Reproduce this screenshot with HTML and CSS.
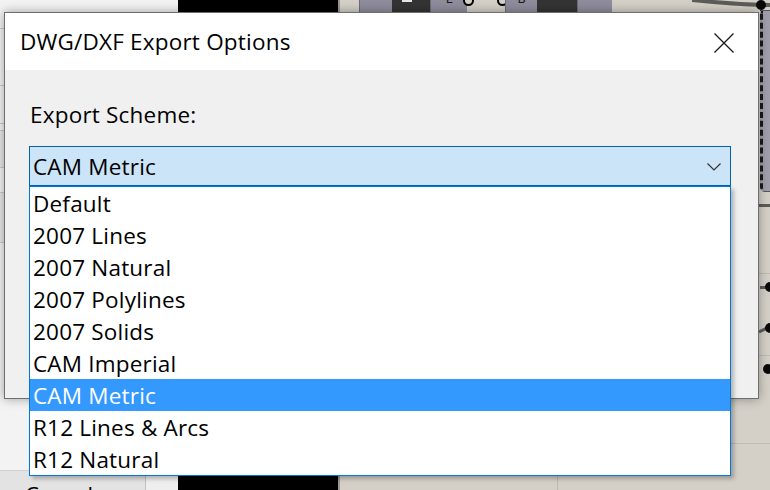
FILE: index.html
```html
<!DOCTYPE html>
<html>
<head>
<meta charset="utf-8">
<link rel="stylesheet" href="styles.css">
</head>
<body>
<div class="desktop">
  <div class="left-panel">
    <div class="lp-row r1"></div>
    <div class="lp-row r2"></div>
    <div class="lp-row r3"></div>
    <div class="lp-row r4"></div>
    <div class="lp-row r5 shade"></div>
    <div class="lp-row r6"></div>
    <div class="lp-row r7 shade"></div>
    <div class="lp-fill"></div>
    <div class="lp-bottom">
      <div class="lp-btn"><span class="cancel">Cancel</span></div>
      <div class="lp-rest"></div>
    </div>
  </div>
  <div class="black-col"></div>
  <div class="canvas">
    <div class="node comp" style="left:19px;width:33px"></div>
    <div class="node dark" style="left:52px;width:38px"><div class="mark"></div></div>
    <div class="node comp" style="left:90px;width:37px"><span class="glyph">L</span></div>
    <div class="node port" style="left:123px"></div>
    <div class="node port" style="left:157px"></div>
    <div class="node comp" style="left:165px;width:32px"><span class="glyph">B</span></div>
    <div class="node dark" style="left:197px;width:40px"></div>
    <div class="node comp" style="left:237px;width:35px"></div>
    <svg class="wire-top" width="90" height="14" viewBox="0 0 90 14"><path d="M0 0 C30 3 55 5 80 5" stroke="#5c5c58" stroke-width="4" fill="none"/></svg>
    <div class="dot" style="left:416px;top:0px"></div>
    <div class="side-comp"></div>
    <div class="hwire" style="top:204px"></div>
    <div class="gline" style="top:273px"></div>
    <div class="hwire" style="top:286px;left:420px;width:10px"></div>
    <svg class="wire-slope" width="14" height="12" viewBox="0 0 14 12"><path d="M0 10 L12 4" stroke="#5c5c58" stroke-width="3" fill="none"/></svg>
    <div class="gline" style="top:355px"></div>
    <div class="gline" style="top:443px"></div>
    <div class="dot" style="left:425px;top:282px"></div>
    <div class="dot" style="left:425px;top:323px"></div>
    <div class="dot" style="left:423px;top:364px"></div>
    <div class="vline" style="left:217px;top:476px"></div>
  </div>

  <div class="dialog">
    <div class="titlebar">
      <span class="title">DWG/DXF Export Options</span>
      <svg class="close" width="20" height="20" viewBox="0 0 20 20"><path d="M0.5 0.5 L19.5 19.5 M19.5 0.5 L0.5 19.5" stroke="#1a1a1a" stroke-width="1.3" fill="none"/></svg>
    </div>
    <div class="dlg-body">
      <div class="label">Export Scheme:</div>
      <div class="combo">
        <span class="combo-text">CAM Metric</span>
        <svg class="chev" width="14" height="8" viewBox="0 0 14 8"><path d="M0.5 0.5 L7 7 L13.5 0.5" stroke="#333" stroke-width="1.2" fill="none"/></svg>
      </div>
    </div>
  </div>

  <ul class="droplist">
    <li>Default</li>
    <li>2007 Lines</li>
    <li>2007 Natural</li>
    <li>2007 Polylines</li>
    <li>2007 Solids</li>
    <li>CAM Imperial</li>
    <li class="sel">CAM Metric</li>
    <li>R12 Lines &amp; Arcs</li>
    <li>R12 Natural</li>
  </ul>
</div>
</body>
</html>
```

FILE: styles.css
```css
* { box-sizing: border-box; }
html, body { margin: 0; padding: 0; }
body {
  width: 770px;
  height: 490px;
  overflow: hidden;
  font-family: "Open Sans", "Noto Sans", "Liberation Sans", sans-serif;
}
.desktop {
  position: relative;
  width: 770px;
  height: 490px;
  display: flex;
  overflow: hidden;
  background: #d4d0c8;
}
.left-panel {
  width: 178px;
  height: 490px;
  display: flex;
  flex-direction: column;
  background: #f3f3f3;
}
.lp-row { border-bottom: 1px solid #c9c9c9; }
.lp-row.shade { background: #e7e7e7; }
.r1 { height: 29px; }
.r2 { height: 57px; }
.r3 { height: 38px; }
.r4 { height: 7px; }
.r5 { height: 37px; }
.r6 { height: 25px; }
.r7 { height: 50px; }
.lp-fill { flex: 1; }
.lp-bottom {
  height: 20px;
  display: flex;
  border-top: 1px solid #cfcfcf;
}
.lp-btn {
  width: 146px;
  background: #e3e3e3;
  border-right: 1px solid #c3c3c3;
  overflow: hidden;
  padding-left: 25px;
}
.cancel {
  display: block;
  font-size: 22px;
  line-height: 22px;
  margin-top: 12px;
  color: #000;
}
.lp-rest { flex: 1; background: #efefef; }
.black-col {
  width: 160px;
  height: 490px;
  background: #000;
}
.canvas {
  position: relative;
  flex: 1;
  height: 490px;
  background: #d4d0c8;
  border-left: 2px solid #9b978f;
}
.node {
  position: absolute;
  top: 0;
  height: 12px;
  overflow: hidden;
}
.node.comp { background: #8f8d9c; border-left: 1px solid #6e6c7a; }
.node.dark { background: #343434; }
.node.dark .mark {
  margin-left: 10px;
  width: 10px;
  height: 2px;
  background: #e6e6e6;
}
.glyph {
  display: block;
  font-family: "DejaVu Sans", sans-serif;
  font-size: 12px;
  line-height: 12px;
  margin-top: -7px;
  text-align: center;
  color: #1a1a1a;
}
.node.port {
  top: -5px;
  width: 11px;
  height: 11px;
  border-radius: 50%;
  border: 2px solid #000;
  background: #d4d0c8;
}
.wire-top { position: absolute; left: 352px; top: 0; }
.dot {
  position: absolute;
  width: 10px;
  height: 10px;
  border-radius: 50%;
  background: #0a0a0a;
}
.side-comp {
  position: absolute;
  left: 420px;
  top: 10px;
  width: 30px;
  height: 182px;
  background: #a09eab;
  border: 1px solid #555;
  border-left: 3px dashed #1a1a1a;
  border-radius: 0 0 0 5px;
}
.hwire {
  position: absolute;
  left: 418px;
  width: 20px;
  height: 3px;
  background: #5c5c58;
}
.wire-slope { position: absolute; left: 419px; top: 322px; }
.gline {
  position: absolute;
  left: 0;
  right: 0;
  height: 1px;
  background: #bfbbb3;
}
.vline {
  position: absolute;
  width: 1px;
  height: 14px;
  background: #bdb9b1;
}

/* dialog */
.dialog {
  position: absolute;
  left: 4px;
  top: 12px;
  width: 755px;
  height: 387px;
  border: 1px solid #6f6f6f;
  background: #f0f0f0;
  box-shadow: 0 0 10px rgba(0,0,0,0.35);
  display: flex;
  flex-direction: column;
  font-size: 22.5px;
  letter-spacing: 0.2px;
}
.titlebar {
  height: 57px;
  background: #fff;
  display: flex;
  align-items: center;
  justify-content: space-between;
  padding: 0 24px 0 15px;
}
.title {
  line-height: 30px;
  color: #000;
}
.close { display: block; margin-top: 2px; }
.dlg-body {
  flex: 1;
  padding: 31px 27px 0 24px;
}
.label {
  line-height: 28px;
  padding-left: 1px;
  color: #000;
}
.combo {
  margin-top: 17px;
  height: 40px;
  border: 1px solid #0063b1;
  background: #cce4f7;
  display: flex;
  align-items: center;
  justify-content: space-between;
  padding: 0 9px 0 3px;
}
.combo-text { line-height: 30px; margin-top: 2px; color: #000; }
.chev { display: block; margin-top: 1px; }

.droplist {
  position: absolute;
  left: 29px;
  top: 186px;
  width: 702px;
  height: 290px;
  margin: 0;
  padding: 0;
  list-style: none;
  background: #fff;
  border: 1px solid #0078d7;
  box-shadow: 3px 3px 4px rgba(0,0,0,0.25);
  font-size: 22.5px;
  letter-spacing: 0.2px;
}
.droplist li {
  height: 32px;
  line-height: 33px;
  padding-left: 3px;
  color: #000;
}
.droplist li.sel {
  background: #3399ff;
  color: #fff;
}
```
